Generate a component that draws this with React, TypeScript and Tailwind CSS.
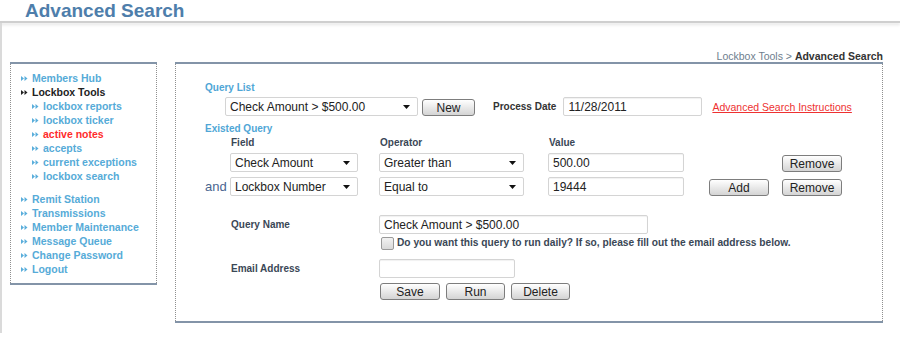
import React from "react";

const font = { fontFamily: '"Liberation Sans", Arial, sans-serif' };

function Bullet({ dark }: { dark?: boolean }) {
  return (
    <svg width="7" height="5" viewBox="0 0 7 5" className="mr-[4px] shrink-0">
      <path d="M0 0 L3 2.5 L0 5 Z M3.5 0 L6.5 2.5 L3.5 5 Z" fill={dark ? "#222" : "#5aaedb"} />
    </svg>
  );
}

function NavItem({ label, sub, dark, red }: { label: string; sub?: boolean; dark?: boolean; red?: boolean }) {
  return (
    <div className={`flex items-center h-[14px] ${sub ? "pl-[21px]" : "pl-[10px]"}`}>
      <Bullet dark={dark} />
      <span className={`font-bold text-[10.5px] leading-[14px] ${dark ? "text-[#222]" : red ? "text-[#ff2b2b]" : "text-[#56abd8]"}`}>{label}</span>
    </div>
  );
}

function Select({ value, cls }: { value: string; cls: string }) {
  return (
    <div className={`${cls} h-[19px] flex items-center justify-between border border-[#d4d4d4] rounded-[2px] bg-white pl-[4px] pr-[7px] shrink-0`}>
      <span className="text-[12px] text-[#222] leading-none">{value}</span>
      <svg width="7" height="4" viewBox="0 0 7 4"><path d="M0 0 H7 L3.5 4 Z" fill="#111" /></svg>
    </div>
  );
}

function Field({ value, cls }: { value?: string; cls: string }) {
  return (
    <input
      readOnly
      value={value ?? ""}
      className={`${cls} block h-[19px] border border-[#d4d4d4] rounded-[2px] bg-white px-[4px] text-[12px] text-[#222] shadow-[inset_0_1px_1px_rgba(0,0,0,0.06)] outline-none shrink-0`}
      style={font}
    />
  );
}

function Btn({ label, cls }: { label: string; cls: string }) {
  return (
    <button
      className={`${cls} block h-[17px] border border-[#7d7d7d] rounded-[3px] bg-gradient-to-b from-white to-[#d4d4d4] text-[12px] leading-none text-[#222] shrink-0 pt-[1px]`}
      style={font}
    >
      {label}
    </button>
  );
}

function Box({ cls, children }: { cls: string; children: React.ReactNode }) {
  return (
    <div className={`${cls} border-t-2 border-b-2 border-[#8394a8]`}>
      <div className="h-full border-x border-dotted border-[#8f8f8f]">{children}</div>
    </div>
  );
}

export default function App() {
  return (
    <div className="w-[900px] h-[353px] bg-white overflow-hidden" style={font}>
      <div className="h-[21px] pl-[25px] text-[19px] font-bold leading-[21px] text-[#4e7eab]">Advanced Search</div>
      <div className="h-[2px] bg-[#cfcfcf] shadow-[0_2px_3px_rgba(0,0,0,0.12)]" />

      <div className="flex h-[310px] border-l-2 border-[#dadada]">
        {/* sidebar */}
        <Box cls="ml-[8px] mt-[39px] w-[147px] self-start">
          <div className="py-[7px]">
            <NavItem label="Members Hub" />
            <NavItem label="Lockbox Tools" dark />
            <NavItem label="lockbox reports" sub />
            <NavItem label="lockbox ticker" sub />
            <NavItem label="active notes" sub red />
            <NavItem label="accepts" sub />
            <NavItem label="current exceptions" sub />
            <NavItem label="lockbox search" sub />
            <div className="h-[9px]" />
            <NavItem label="Remit Station" />
            <NavItem label="Transmissions" />
            <NavItem label="Member Maintenance" />
            <NavItem label="Message Queue" />
            <NavItem label="Change Password" />
            <NavItem label="Logout" />
          </div>
        </Box>

        {/* main */}
        <div className="ml-[18px] w-[708px] flex flex-col">
          <div className="mt-[27px] h-[12px] leading-[12px] text-right text-[10.5px] text-[#6e7e8e]">
            Lockbox Tools &gt; <span className="font-bold text-[#333]">Advanced Search</span>
          </div>

          <Box cls="h-[261px]">
            <div className="pt-[17px] pl-[29px] leading-[14px]">
              <div className="text-[10px] font-bold leading-[14px] text-[#4fa6d6]">Query List</div>
              <div className="mt-[2px] flex items-center pl-[20px]">
                <Select value="Check Amount > $500.00" cls="w-[193px]" />
                <Btn label="New" cls="w-[53px] ml-[4px] mt-[2px]" />
                <span className="ml-[18px] text-[10px] font-bold text-[#333]">Process Date</span>
                <Field value="11/28/2011" cls="w-[139px] ml-[7px]" />
                <a className="ml-[10px] text-[10.5px] text-[#ee3131] underline">Advanced Search Instructions</a>
              </div>

              <div className="mt-[6px] text-[10px] font-bold leading-[14px] text-[#4fa6d6]">Existed Query</div>
              <div className="flex text-[10px] font-bold leading-[14px] text-[#3a4756]">
                <span className="ml-[26px] w-[149px]">Field</span>
                <span className="w-[169px]">Operator</span>
                <span>Value</span>
              </div>

              <div className="mt-[3px] flex items-center">
                <span className="w-[25px]" />
                <Select value="Check Amount" cls="w-[128px]" />
                <Select value="Greater than" cls="w-[145px] ml-[21px]" />
                <Field value="500.00" cls="w-[136px] ml-[24px]" />
                <Btn label="Remove" cls="w-[60px] ml-[98px] mt-[2px]" />
              </div>
              <div className="mt-[5px] flex items-center">
                <span className="w-[25px] text-[13px] text-[#4a6590] leading-none">and</span>
                <Select value="Lockbox Number" cls="w-[128px]" />
                <Select value="Equal to" cls="w-[145px] ml-[21px]" />
                <Field value="19444" cls="w-[136px] ml-[24px]" />
                <Btn label="Add" cls="w-[60px] ml-[25px] mt-[2px]" />
                <Btn label="Remove" cls="w-[60px] ml-[13px] mt-[2px]" />
              </div>

              <div className="mt-[19px] flex items-center">
                <span className="ml-[26px] w-[148px] text-[10px] font-bold text-[#3a4756]">Query Name</span>
                <Field value="Check Amount > $500.00" cls="w-[269px]" />
              </div>
              <div className="mt-[2px] h-[14px] flex items-center pl-[176px]">
                <span className="w-[13px] h-[13px] border border-[#9a9a9a] bg-gradient-to-b from-[#f2f2f2] to-[#d9d9d9] rounded-[2px] shrink-0" />
                <span className="ml-[3px] text-[10.2px] font-bold text-[#3a4756]">
                  Do you want this query to run daily? If so, please fill out the email address below.
                </span>
              </div>
              <div className="mt-[9px] flex items-center">
                <span className="ml-[26px] w-[148px] text-[10px] font-bold text-[#3a4756]">Email Address</span>
                <Field cls="w-[136px]" />
              </div>
              <div className="mt-[5px] flex items-center pl-[175px] gap-[6px]">
                <Btn label="Save" cls="w-[60px]" />
                <Btn label="Run" cls="w-[59px]" />
                <Btn label="Delete" cls="w-[59px]" />
              </div>
            </div>
          </Box>
        </div>
      </div>
    </div>
  );
}
